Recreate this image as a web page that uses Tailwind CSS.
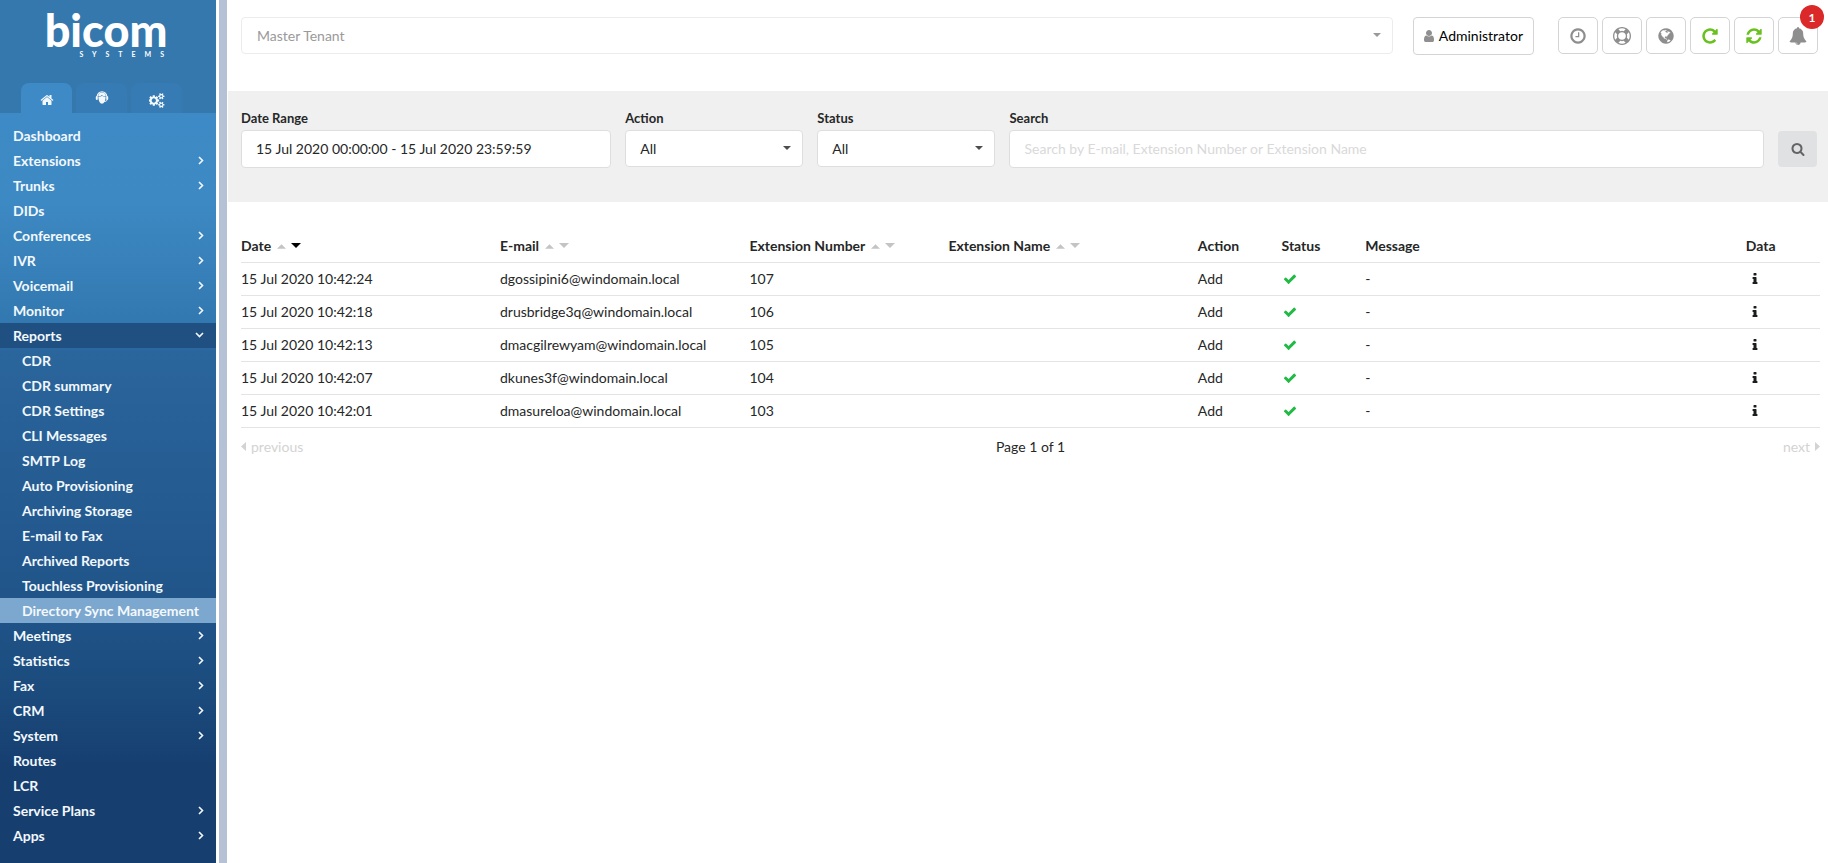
<!DOCTYPE html>
<html lang="en">
<head>
<meta charset="utf-8">
<title>Directory Sync Management</title>
<script src="https://cdn.jsdelivr.net/npm/@tailwindcss/browser@4"></script>
</head>
<body class="bg-white font-['Lato',sans-serif] text-sm leading-5 text-[#262727]">
<svg class="hidden" aria-hidden="true">
  <symbol id="check" viewBox="0 0 1792 1792"><path d="M1671 566q0 40-28 68l-724 724-136 136q-28 28-68 28t-68-28l-136-136-362-362q-28-28-28-68t28-68l136-136q28-28 68-28t68 28l294 295 656-657q28-28 68-28t68 28l136 136q28 28 28 68z"/></symbol>
  <symbol id="info" viewBox="0 0 1792 1792"><path d="M1216 1344v128q0 26-19 45t-45 19h-512q-26 0-45-19t-19-45v-128q0-26 19-45t45-19h64v-384h-64q-26 0-45-19t-19-45v-128q0-26 19-45t45-19h384q26 0 45 19t19 45v576h64q26 0 45 19t19 45zm-128-1152v192q0 26-19 45t-45 19h-256q-26 0-45-19t-19-45v-192q0-26 19-45t45-19h256q26 0 45 19t19 45z"/></symbol>
  <symbol id="right" viewBox="0 0 6 9"><path d="M1 1l3.500 3.500L1 8" fill="none" stroke="currentColor" stroke-width="1.600"/></symbol>
  <symbol id="down" viewBox="0 0 9 6"><path d="M1 1l3.500 3.500L8 1" fill="none" stroke="currentColor" stroke-width="1.600"/></symbol>
  <symbol id="sort-up" viewBox="0 0 10 5"><path d="M0 5L5 0l5 5z"/></symbol>
  <symbol id="sort-down" viewBox="0 0 10 5"><path d="M0 0h10L5 5z"/></symbol>
</svg>
<div class="flex min-h-screen">
  <aside class="flex w-[216px] shrink-0 flex-col bg-[#3578ae] text-[#f3f8fc]">
    <a href="#" aria-label="bicom systems" class="flex h-[83px] flex-col items-center pt-2 text-white">
      <span class="pr-1 text-[45px] leading-[44px] font-black">bicom</span>
      <span class="-mt-1 self-end pr-[43px] text-[7px] leading-3 font-bold tracking-[9px]">SYSTEMS</span>
    </a>
    <div class="flex gap-1 pl-[21px]">
      <button aria-label="Home" class="flex h-[30px] w-[51px] items-center justify-center rounded-t-lg bg-[#3d8ac6] pt-1">
        <svg class="size-[14px] fill-current" viewBox="0 0 1792 1792"><path d="M1472 992v480q0 26-19 45t-45 19h-384v-384h-256v384h-384q-26 0-45-19t-19-45v-480q0-1 .5-3t.5-3l575-474 575 474q1 2 1 6zm223-69l-62 74q-8 9-21 11h-3q-13 0-21-7l-692-577-692 577q-12 8-24 7-13-2-21-11l-62-74q-8-10-7-23.5t11-21.5l719-599q32-26 76-26t76 26l244 204v-195q0-14 9-23t23-9h192q14 0 23 9t9 23v408l219 182q10 8 11 21.5t-7 23.5z"/></svg>
      </button>
      <button aria-label="Agents" class="flex h-[30px] w-[51px] items-center justify-center rounded-t-lg bg-[#367bb4]">
        <svg class="h-[14px] w-[14px]" viewBox="0 0 14 14"><path d="M2.200 5.500a4.800 4.800 0 0 1 9.600 0" fill="none" stroke="currentColor" stroke-width="1.100"/><path d="M3.200 5.200a3.800 3.800 0 0 1 7.600 0c-1.500.3-3-.2-4-1.200-.8.900-2 1.300-3.600 1.200z" fill="currentColor"/><path d="M3.400 5.800c1.500 0 2.800-.3 3.600-1.100 1 .8 2.300 1.200 3.600 1.100 0 4-1.500 7-3.600 7S3.400 9.800 3.400 5.800z" fill="currentColor"/><rect x=".8" y="5" width="2" height="4" rx="1" fill="currentColor"/><rect x="11.200" y="5" width="2" height="4" rx="1" fill="currentColor"/><path d="M12.200 8.500c-.3 1.600-1.500 2.200-4.200 2" fill="none" stroke="currentColor" stroke-width=".9"/></svg>
      </button>
      <button aria-label="Settings" class="flex h-[30px] w-[51px] items-center justify-center rounded-t-lg bg-[#367bb4] pt-1">
        <svg class="h-[15px] w-4 fill-current" viewBox="0 0 1920 1792"><path d="M832 896q0-106-75-181t-181-75-181 75-75 181 75 181 181 75 181-75 75-181zm768 512q0-52-38-90t-90-38-90 38-38 90q0 53 37.5 90.5t90.5 37.5 90.5-37.5 37.5-90.5zm0-1024q0-52-38-90t-90-38-90 38-38 90q0 53 37.5 90.5t90.5 37.5 90.5-37.5 37.5-90.5zm-384 421v185q0 10-7 19.5t-16 10.5l-155 24q-11 35-32 76 34 48 90 115 7 11 7 20 0 12-7 19-23 30-82.5 89.5t-78.5 59.5q-11 0-21-7l-115-90q-37 19-77 31-11 108-23 155-7 24-30 24h-186q-11 0-20-7.5t-10-17.5l-23-153q-34-10-75-31l-118 89q-7 7-20 7-11 0-21-8-144-133-144-160 0-9 7-19 10-14 41-53t47-61q-23-44-35-82l-152-24q-10-1-17-9.5t-7-19.5v-185q0-10 7-19.5t16-10.5l155-24q11-35 32-76-34-48-90-115-7-11-7-20 0-12 7-20 22-30 82-89t79-59q11 0 21 7l115 90q34-18 77-32 11-108 23-154 7-24 30-24h186q11 0 20 7.5t10 17.5l23 153q34 10 75 31l118-89q8-7 20-7 11 0 21 8 144 133 144 160 0 8-7 19-12 16-42 54t-45 60q23 48 34 82l152 23q10 2 17 10.5t7 19.5zm640 533v140q0 16-149 31-12 27-30 52 51 113 51 138 0 4-4 7-122 71-124 71-8 0-46-47t-52-68q-20 2-30 2t-30-2q-14 21-52 68t-46 47q-2 0-124-71-4-3-4-7 0-25 51-138-18-25-30-52-149-15-149-31v-140q0-16 149-31 13-29 30-52-51-113-51-138 0-4 4-7 4-2 35-20t59-34 30-16q8 0 46 46.5t52 67.5q20-2 30-2t30 2q51-71 92-112l6-2q4 0 124 70 4 3 4 7 0 25-51 138 17 23 30 52 149 15 149 31zm0-1024v140q0 16-149 31-12 27-30 52 51 113 51 138 0 4-4 7-122 71-124 71-8 0-46-47t-52-68q-20 2-30 2t-30-2q-14 21-52 68t-46 47q-2 0-124-71-4-3-4-7 0-25 51-138-18-25-30-52-149-15-149-31v-140q0-16 149-31 13-29 30-52-51-113-51-138 0-4 4-7 4-2 35-20t59-34 30-16q8 0 46 46.5t52 67.5q20-2 30-2t30 2q51-71 92-112l6-2q4 0 124 70 4 3 4 7 0 25-51 138 17 23 30 52 149 15 149 31z"/></svg>
      </button>
    </div>
    <nav class="flex-1 bg-[linear-gradient(#3d8ac6_0%,#3d89c3_12%,#3277af_29%,#2a659c_32%,#205489_66%,#1c4c7e_76%,#163f70_87%,#163f70_100%)] pt-[10px] pb-3 font-bold *:flex *:h-[25px] *:items-center *:justify-between *:pr-3 *:pl-[13px]">
      <a href="#">Dashboard</a>
      <a href="#">Extensions<svg class="mb-px h-[9px] w-[6px]"><use href="#right"/></svg></a>
      <a href="#">Trunks<svg class="mb-px h-[9px] w-[6px]"><use href="#right"/></svg></a>
      <a href="#">DIDs</a>
      <a href="#">Conferences<svg class="mb-px h-[9px] w-[6px]"><use href="#right"/></svg></a>
      <a href="#">IVR<svg class="mb-px h-[9px] w-[6px]"><use href="#right"/></svg></a>
      <a href="#">Voicemail<svg class="mb-px h-[9px] w-[6px]"><use href="#right"/></svg></a>
      <a href="#">Monitor<svg class="mb-px h-[9px] w-[6px]"><use href="#right"/></svg></a>
      <a href="#" class="bg-[#205082]">Reports<svg class="mb-px h-[6px] w-[9px]"><use href="#down"/></svg></a>
      <a href="#"><span class="pl-[9px]">CDR</span></a>
      <a href="#"><span class="pl-[9px]">CDR summary</span></a>
      <a href="#"><span class="pl-[9px]">CDR Settings</span></a>
      <a href="#"><span class="pl-[9px]">CLI Messages</span></a>
      <a href="#"><span class="pl-[9px]">SMTP Log</span></a>
      <a href="#"><span class="pl-[9px]">Auto Provisioning</span></a>
      <a href="#"><span class="pl-[9px]">Archiving Storage</span></a>
      <a href="#"><span class="pl-[9px]">E-mail to Fax</span></a>
      <a href="#"><span class="pl-[9px]">Archived Reports</span></a>
      <a href="#"><span class="pl-[9px]">Touchless Provisioning</span></a>
      <a href="#" aria-current="page" class="bg-[#7ca7cf]"><span class="pl-[9px]">Directory Sync Management</span></a>
      <a href="#">Meetings<svg class="mb-px h-[9px] w-[6px]"><use href="#right"/></svg></a>
      <a href="#">Statistics<svg class="mb-px h-[9px] w-[6px]"><use href="#right"/></svg></a>
      <a href="#">Fax<svg class="mb-px h-[9px] w-[6px]"><use href="#right"/></svg></a>
      <a href="#">CRM<svg class="mb-px h-[9px] w-[6px]"><use href="#right"/></svg></a>
      <a href="#">System<svg class="mb-px h-[9px] w-[6px]"><use href="#right"/></svg></a>
      <a href="#">Routes</a>
      <a href="#">LCR</a>
      <a href="#">Service Plans<svg class="mb-px h-[9px] w-[6px]"><use href="#right"/></svg></a>
      <a href="#">Apps<svg class="mb-px h-[9px] w-[6px]"><use href="#right"/></svg></a>
    </nav>
  </aside>
  <div class="mr-px ml-[3px] w-2 shrink-0 bg-[#b5c1d5]"></div>
  <main class="min-w-0 flex-1">
    <header class="flex h-[91px] items-start pt-[17px] pr-[10px] pl-[13px]">
      <div class="relative min-w-0 flex-1">
        <select aria-label="Tenant" class="h-[37px] w-full appearance-none rounded border border-[#ececec] bg-white px-[15px] text-[#9a9a9a]"><option>Master Tenant</option></select>
        <svg class="pointer-events-none absolute top-4 right-3 h-1 w-2 fill-[#999]"><use href="#sort-down"/></svg>
      </div>
      <button class="ml-5 flex h-[38px] items-center gap-[3px] rounded border border-[#d4d4d5] pr-[10px] pl-2 text-black">
        <svg class="size-[14px] fill-[#8f8f8f]" viewBox="0 0 1792 1792"><path d="M1536 1399q0 109-62.5 187t-150.5 78h-854q-88 0-150.5-78t-62.5-187q0-85 8.5-160.5t31.5-152 58.5-131 94-89 134.5-34.5q131 128 313 128t313-128q76 0 134.5 34.5t94 89 58.5 131 31.500 152 8.500 160.500zm-256-887q0 159-112.500 271.500t-271.500 112.500-271.500-112.500-112.500-271.500 112.500-271.500 271.500-112.500 271.500 112.500 112.500 271.500z"/></svg>
        Administrator
      </button>
      <div class="ml-6 flex gap-1 *:flex *:h-[37px] *:w-10 *:items-center *:justify-center *:rounded-[5px] *:border *:border-[#d4d4d5]">
        <button aria-label="Clock"><svg class="size-[18px] fill-[#8e8e8e]" viewBox="0 0 1792 1792"><path d="M1024 544v448q0 14-9 23t-23 9h-320q-14 0-23-9t-9-23v-64q0-14 9-23t23-9h224v-352q0-14 9-23t23-9h64q14 0 23 9t9 23zm416 352q0-148-73-273t-198-198-273-73-273 73-198 198-73 273 73 273 198 198 273 73 273-73 198-198 73-273zm224 0q0 209-103 385.5t-279.5 279.5-385.5 103-385.5-103-279.5-279.5-103-385.5 103-385.5 279.5-279.5 385.5-103 385.5 103 279.5 279.5 103 385.5z"/></svg></button>
        <button aria-label="Help"><svg class="size-[18px] fill-[#8e8e8e]" viewBox="0 0 1792 1792"><path d="M896 0q182 0 348 71t286 191 191 286 71 348-71 348-191 286-286 191-348 71-348-71-286-191-191-286-71-348 71-348 191-286 286-191 348-71zm0 128q-190 0-361 90l194 194q82-28 167-28t167 28l194-194q-171-90-361-90zm-678 1129l194-194q-28-82-28-167t28-167l-194-194q-90 171-90 361t90 361zm678 407q190 0 361-90l-194-194q-82 28-167 28t-167-28l-194 194q171 90 361 90zm0-384q159 0 271.5-112.5t112.5-271.5-112.5-271.5-271.5-112.5-271.5 112.5-112.5 271.5 112.5 271.5 271.5 112.5zm484-217l194 194q90-171 90-361t-90-361l-194 194q28 82 28 167t-28 167z"/></svg></button>
        <button aria-label="Language"><svg class="size-[18px] fill-[#8e8e8e]" viewBox="0 0 1792 1792"><path d="M896 128q209 0 385.5 103t279.5 279.5 103 385.5-103 385.5-279.5 279.5-385.5 103-385.5-103-279.5-279.5-103-385.5 103-385.5 279.5-279.5 385.5-103zm274 521q-2 1-9.5 9.5t-13.5 9.5q2 0 4.5-5t5-11 3.5-7q6-7 22-15 14-6 52-12 34-8 51 11-2-2 9.5-13t14.5-12q3-2 15-4.5t15-7.5l2-22q-12 1-17.5-7t-6.5-21q0 2-6 8 0-7-4.5-8t-11.5 1-9 1q-10-3-15-7.5t-8-16.5-4-15q-2-5-9.5-11t-9.5-10q-1-2-2.5-5.5t-3-6.5-4-5.5-5.5-2.5-7 5-7.5 10-4.5 5q-3-2-6-1.5t-4.5 1-4.5 3-5 3.5q-3 2-8.5 3t-8.5 2q15-5-1-11-10-4-16-3 9-4 7.5-12t-8.5-14h5q-1-4-8.5-8.5t-17.5-8.5-13-6q-8-5-34-9.5t-33-.5q-5 6-4.5 10.5t4 14 3.5 12.5q1 6-5.5 13t-6.5 12q0 7 14 15.5t10 21.5q-3 8-16 16t-16 12q-5 8-1.5 18.5t10.5 16.5q2 2 1.5 4t-3.5 4.5-5.5 4-6.5 3.5l-3 2q-11 5-20.5-6t-13.5-26q-7-25-16-30-23-8-29 1-5-13-41-26-25-9-58-4 6-1 0-15-7-15-19-12 3-6 4-17.5t1-13.5q3-13 12-23 1-1 7-8.5t9.5-13.5.5-6q35 4 50-11 5-5 11.5-17t10.5-17q9-6 14-5.5t14.5 5.5 14.5 5q14 1 15.5-11t-7.5-20q12 1 3-17-4-7-8-9-12-4-27 5-8 4 2 8-1-1-9.5 10.5t-16.5 17.5-16-5q-1-1-5.5-13.5t-9.5-13.5q-8 0-16 15 3-8-11-15t-24-8q19-12-8-27-7-4-20.5-5t-19.5 4q-5 7-5.5 11.5t5 8 10.5 5.5 11.5 4 8.5 3q14 10 8 14-2 1-8.5 3.5t-11.5 4.5-6 4q-3 4 0 14t-2 14q-5-5-9-17.5t-7-16.5q7 9-25 6l-10-1q-4 0-16 2t-20.5 1-13.5-8q-4-8 0-20 1-4 4-2-4-3-11-9.5t-10-8.5q-46 15-94 41 6 1 12-1 5-2 13-6.5t10-5.5q34-14 42-7l5-5q14 16 20 25-7-4-30-1-20 6-22 12 7 12 5 18-4-3-11.5-10t-14.5-11-15-5q-16 0-22 1-146 80-235 222 7 7 12 8 4 1 5 9t2.5 11 11.5-3q9 8 3 19 1-1 44 27 19 17 21 21 3 11-10 18-1-2-9-9t-9-4q-3 5 .5 18.5t10.5 12.5q-7 0-9.5 16t-2.5 35.5-1 23.5l2 1q-3 12 5.5 34.5t21.5 19.5q-13 3 20 43 6 8 8 9 3 2 12 7.5t15 10 10 10.5q4 5 10 22.5t14 23.5q-2 6 9.5 20t10.5 23q-1 0-2.5 1t-2.5 1q3 7 15.5 14t15.5 13q1 3 2 10t3 11 8 2q2-20-24-62-15-25-17-29-3-5-5.500-15.500t-4.500-14.500q2 0 6 1.500t8.500 3.500 7.500 4 2 3q-3 7 2 17.500t12 18.500 17 19 12 13q6 6 14 19.500t0 13.500q9 0 20 10.500t17 19.500q5 8 8 26t5 24q2 7 8.500 13.500t12.500 9.500l16 8 13 7q5 2 18.500 10.500t21.500 11.500q10 4 16 4t14.500-2.500 13.500-3.500q15-2 29 15t21 21q36 19 55 11-2 1 .5 7.500t8 15.500 9 14.500 5.500 8.500q5 6 18 15t18 15q6-4 7-9-3 8 7 20t18 10q14-3 14-32-31 15-49-18 0-1-2.500-5.500t-4-8.500-2.500-8.500 0-7.500 5-3q9 0 10-3.500t-2-12.500-4-13q-1-8-11-20t-12-15q-5 9-16 8t-16-9q0 1-1.500 5.500t-1.500 6.500q-13 0-15-1 1-3 2.500-17.500t3.500-22.500q1-4 5.500-12t7.500-14.500 4-12.500-4.500-9.500-17.500-2.500q-19 1-26 20-1 3-3 10.500t-5 11.500-9 7q-7 3-24 2t-24-5q-13-8-22.500-29t-9.500-37q0-10 2.500-26.500t3-25-5.500-24.500q3-2 9-9.500t10-10.500q2-1 4.500-1.500t4.500 0 4-1.500 3-6q-1-1-4-3-3-3-4-3 7 3 28.500-1.500t27.500 1.500q15 11 22-2 0-1-2.500-9.500t-.5-13.500q5 27 29 9 3 3 15.500 5t17.500 5q3 2 7 5.500t5.500 4.500 5-.5 8.500-6.500q10 14 12 24 11 40 19 44 7 3 11 2t4.500-9.500 0-14-1.500-12.500l-1-8v-18l-1-8q-15-3-18.500-12t1.500-18.500 15-18.500q1-1 8-3.500t15.500-6.500 12.500-8q21-19 15-35 7 0 11-9-1 0-5-3t-7.500-5-4.500-2q9-5 2-16 5-3 7.500-11t7.500-10q9 12 21 2 7-8 1-16 5-7 20.500-10.500t18.500-9.500q7 2 8-2t1-12 3-12q4-5 15-9t13-5l17-11q3-4 0-4 18 2 31-11 10-11-6-20 3-6-3-9.500t-15-5.500q3-1 11.500-.5t10.500-1.500q15-10-7-16-17-5-43 12zm-163 877q206-36 351-189-3-3-12.500-4.500t-12.500-3.500q-18-7-24-8 1-7-2.500-13t-8-9-12.500-8-11-7q-2-2-7-6t-7-5.500-7.500-4.500-8.500-2-10 1l-3 1q-3 1-5.500 2.500t-5.500 3-4 3 0 2.500q-21-17-36-22-5-1-11-5.500t-10.500-7-10-1.500-11.500 7q-5 5-6 15t-2 13q-7-5 0-17.500t2-18.500q-3-6-10.500-4.500t-12 4.500-11.500 8.500-9 6.500-8.500 5.500-8.500 7.500q-3 4-6 12t-5 11q-2-4-11.500-6.500t-9.500-5.500q2 10 4 35t5 38q7 31-12 48-27 25-29 40-4 22 12 26 0 7-8 20.500t-7 21.500q0 6 2 16z"/></svg></button>
        <button aria-label="Reload"><svg class="size-[18px] fill-[#69c11f]" viewBox="0 0 1792 1792"><path d="M1664 256v448q0 26-19 45t-45 19h-448q-42 0-59-40-17-39 14-69l138-138q-148-137-349-137-104 0-198.5 40.5t-163.5 109.5-109.5 163.5-40.5 198.5 40.5 198.5 109.5 163.5 163.5 109.5 198.5 40.5q119 0 225-52t179-147q7-10 23-12 15 0 25 9l137 138q9 8 9.5 20.5t-7.5 22.5q-109 132-264 204.5t-327 72.5q-156 0-298-61t-245-164-164-245-61-298 61-298 164-245 245-164 298-61q147 0 284.5 55.5t244.5 156.5l130-129q29-31 70-14 39 17 39 59z"/></svg></button>
        <button aria-label="Refresh"><svg class="size-[18px] fill-[#69c11f]" viewBox="0 0 1792 1792"><path d="M1639 1056q0 5-1 7-64 268-268 434.5t-478 166.5q-146 0-282.5-55t-243.5-157l-129 129q-19 19-45 19t-45-19-19-45v-448q0-26 19-45t45-19h448q26 0 45 19t19 45-19 45l-137 137q71 66 161 102t187 36q134 0 250-65t186-179q11-17 53-117 8-23 30-23h192q13 0 22.5 9.5t9.5 22.5zm25-800v448q0 26-19 45t-45 19h-448q-26 0-45-19t-19-45 19-45l138-138q-148-137-349-137-134 0-250 65t-186 179q-11 17-53 117-8 23-30 23h-199q-13 0-22.5-9.5t-9.5-22.5v-7q65-268 270-434.5t480-166.5q146 0 284 55.5t245 156.5l130-129q19-19 45-19t45 19 19 45z"/></svg></button>
        <button aria-label="Notifications" class="relative"><svg class="size-[18px] fill-[#8e8e8e]" viewBox="0 0 1792 1792"><path d="M912 1696q0-16-16-16-59 0-101.5-42.5t-42.5-101.5q0-16-16-16t-16 16q0 73 51.5 124.5t124.5 51.5q16 0 16-16zm816-288q0 52-38 90t-90 38h-448q0 106-75 181t-181 75-181-75-75-181h-448q-52 0-90-38t-38-90q50-42 91-88t85-119.5 74.5-158.5 50-206 19.5-260q0-152 117-282.5t307-158.5q-8-19-8-39 0-40 28-68t68-28 68 28 28 68q0 20-8 39 190 28 307 158.5t117 282.5q0 139 19.5 260t50 206 74.5 158.5 85 119.5 91 88z"/></svg>
          <span class="absolute -top-[13px] -right-[7px] flex size-6 items-center justify-center rounded-full bg-[#db2828] pt-px text-xs font-bold text-white">1</span></button>
      </div>
    </header>
    <form class="grid h-[111px] grid-cols-[370fr_178fr_178fr_754fr_39px] gap-x-[14px] bg-[#f0f0f0] pt-[17px] pr-[11px] pl-[13px]">
      <div><label for="range" class="mb-[2px] block text-[13px] font-bold">Date Range</label><input id="range" value="15 Jul 2020 00:00:00 - 15 Jul 2020 23:59:59" class="h-[38px] w-full rounded border border-[#dededf] bg-white px-[14px] pb-[2px]"></div>
      <div><label for="action" class="mb-[2px] block text-[13px] font-bold">Action</label>
        <div class="relative"><select id="action" class="h-[37px] w-full appearance-none rounded border border-[#dededf] bg-white px-[14px]"><option>All</option></select><svg class="pointer-events-none absolute top-4 right-3 h-1 w-2 fill-[#4d4d4d]"><use href="#sort-down"/></svg></div></div>
      <div><label for="status" class="mb-[2px] block text-[13px] font-bold">Status</label>
        <div class="relative"><select id="status" class="h-[37px] w-full appearance-none rounded border border-[#dededf] bg-white px-[14px]"><option>All</option></select><svg class="pointer-events-none absolute top-4 right-3 h-1 w-2 fill-[#4d4d4d]"><use href="#sort-down"/></svg></div></div>
      <div><label for="search" class="mb-[2px] block text-[13px] font-bold">Search</label><input id="search" placeholder="Search by E-mail, Extension Number or Extension Name" class="h-[38px] w-full rounded border border-[#dededf] bg-white px-[14px] pb-[2px] placeholder:text-[#d9d9d9]"></div>
      <button type="button" aria-label="Search" class="mt-[23px] flex h-9 items-center justify-center rounded bg-[#e0e1e2]"><svg class="size-[14px] fill-[#636465]" viewBox="0 0 1792 1792"><path d="M1216 832q0-185-131.5-316.5t-316.5-131.5-316.5 131.5-131.5 316.5 131.5 316.5 316.5 131.5 316.5-131.5 131.5-316.5zm512 832q0 52-38 90t-90 38q-54 0-90-38l-343-342q-179 124-399 124-143 0-273.5-55.5t-225-150-150-225-55.5-273.5 55.5-273.5 150-225 225-150 273.5-55.5 273.5 55.5 225 150 150 225 55.5 273.5q0 220-124 399l343 343q37 37 37 90z"/></svg></button>
    </form>
    <section class="pt-[29px] pr-2 pl-[13px]">
      <table class="w-full table-fixed text-left">
        <colgroup><col class="w-[16.4%]"><col class="w-[15.8%]"><col class="w-[12.6%]"><col class="w-[15.8%]"><col class="w-[5.3%]"><col class="w-[5.3%]"><col><col class="w-[4.7%]"></colgroup>
        <thead class="font-bold">
          <tr class="h-[31px] border-b border-[#e4e4e5]">
            <th><button class="flex items-center gap-[5px]">Date<svg class="mt-px ml-px h-[5px] w-[9px] fill-[#c4c4c4]"><use href="#sort-up"/></svg><svg class="mb-px h-[5px] w-[10px] fill-black"><use href="#sort-down"/></svg></button></th>
            <th><button class="flex items-center gap-[5px]">E-mail<svg class="mt-px ml-px h-[5px] w-[9px] fill-[#c4c4c4]"><use href="#sort-up"/></svg><svg class="mb-px h-[5px] w-[10px] fill-[#c4c4c4]"><use href="#sort-down"/></svg></button></th>
            <th><button class="flex items-center gap-[5px]">Extension Number<svg class="mt-px ml-px h-[5px] w-[9px] fill-[#c4c4c4]"><use href="#sort-up"/></svg><svg class="mb-px h-[5px] w-[10px] fill-[#c4c4c4]"><use href="#sort-down"/></svg></button></th>
            <th><button class="flex items-center gap-[5px]">Extension Name<svg class="mt-px ml-px h-[5px] w-[9px] fill-[#c4c4c4]"><use href="#sort-up"/></svg><svg class="mb-px h-[5px] w-[10px] fill-[#c4c4c4]"><use href="#sort-down"/></svg></button></th>
            <th>Action</th><th>Status</th><th>Message</th><th>Data</th>
          </tr>
        </thead>
        <tbody class="*:h-[33px] *:border-b *:border-[#e4e4e5]">
          <tr><td>15 Jul 2020 10:42:24</td><td>dgossipini6@windomain.local</td><td>107</td><td></td><td>Add</td><td><svg role="img" aria-label="Success" class="ml-px size-[14px] fill-[#21ba45]"><use href="#check"/></svg></td><td>-</td><td><button aria-label="Details" class="block"><svg class="ml-[2px] size-[14px] fill-[#1b1c1d]"><use href="#info"/></svg></button></td></tr>
          <tr><td>15 Jul 2020 10:42:18</td><td>drusbridge3q@windomain.local</td><td>106</td><td></td><td>Add</td><td><svg role="img" aria-label="Success" class="ml-px size-[14px] fill-[#21ba45]"><use href="#check"/></svg></td><td>-</td><td><button aria-label="Details" class="block"><svg class="ml-[2px] size-[14px] fill-[#1b1c1d]"><use href="#info"/></svg></button></td></tr>
          <tr><td>15 Jul 2020 10:42:13</td><td>dmacgilrewyam@windomain.local</td><td>105</td><td></td><td>Add</td><td><svg role="img" aria-label="Success" class="ml-px size-[14px] fill-[#21ba45]"><use href="#check"/></svg></td><td>-</td><td><button aria-label="Details" class="block"><svg class="ml-[2px] size-[14px] fill-[#1b1c1d]"><use href="#info"/></svg></button></td></tr>
          <tr><td>15 Jul 2020 10:42:07</td><td>dkunes3f@windomain.local</td><td>104</td><td></td><td>Add</td><td><svg role="img" aria-label="Success" class="ml-px size-[14px] fill-[#21ba45]"><use href="#check"/></svg></td><td>-</td><td><button aria-label="Details" class="block"><svg class="ml-[2px] size-[14px] fill-[#1b1c1d]"><use href="#info"/></svg></button></td></tr>
          <tr><td>15 Jul 2020 10:42:01</td><td>dmasureloa@windomain.local</td><td>103</td><td></td><td>Add</td><td><svg role="img" aria-label="Success" class="ml-px size-[14px] fill-[#21ba45]"><use href="#check"/></svg></td><td>-</td><td><button aria-label="Details" class="block"><svg class="ml-[2px] size-[14px] fill-[#1b1c1d]"><use href="#info"/></svg></button></td></tr>
        </tbody>
      </table>
      <div class="mt-[9px] grid grid-cols-3 text-[#d3d3d3]">
        <a href="#" class="flex items-center gap-[5px]"><svg class="h-[9px] w-[5px] fill-current" viewBox="0 0 5 9"><path d="M5 0v9L0 4.500z"/></svg>previous</a>
        <span class="text-center text-[#262727]">Page 1 of 1</span>
        <a href="#" class="flex items-center justify-end gap-[5px]">next<svg class="h-[9px] w-[5px] fill-current" viewBox="0 0 5 9"><path d="M0 0v9l5-4.500z"/></svg></a>
      </div>
    </section>
  </main>
</div>
</body>
</html>
